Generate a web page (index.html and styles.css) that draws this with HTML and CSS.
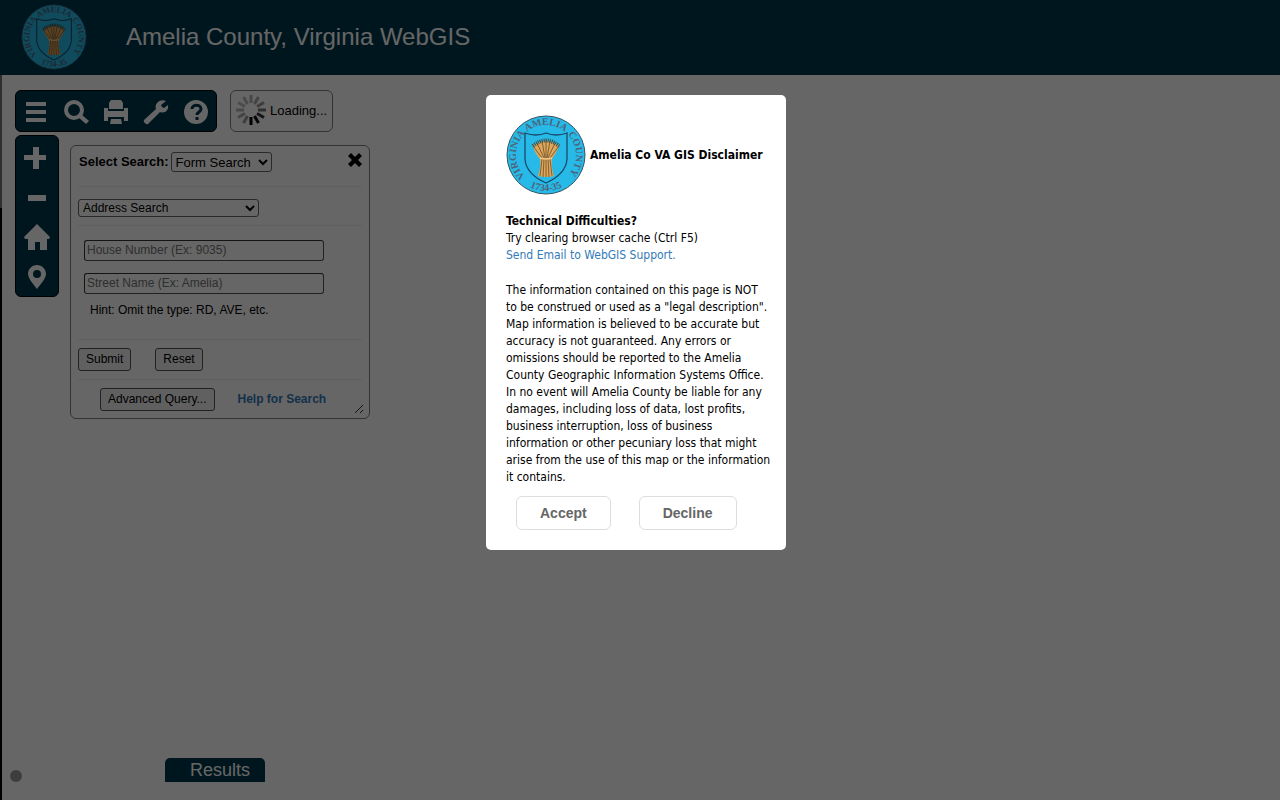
FILE: index.html
```html
<!DOCTYPE html>
<html lang="en">
<head>
  <meta charset="UTF-8">
  <meta name="viewport" content="width=device-width, initial-scale=1.0">
  <title>Amelia County, Virginia WebGIS</title>
  <link rel="stylesheet" href="styles.css">
</head>
<body>
  <!-- county seal, shared by the header and the disclaimer -->
  <svg class="defs" aria-hidden="true">
    <defs>
      <path id="arcTop" d="M10 40 A30 30 0 0 1 70 40"/>
      <path id="arcLower" d="M4 40 A36 36 0 0 0 76 40"/>
      <symbol id="seal" viewBox="0 0 80 80">
        <circle cx="40" cy="40" r="39" fill="#27b9e8" stroke="#31545f" stroke-width="1"/>
        <g class="seal-text">
          <text transform="rotate(-90 40 40)"><textPath href="#arcTop" startOffset="50%">VIRGINIA</textPath></text>
          <text><textPath href="#arcTop" startOffset="50%">AMELIA</textPath></text>
          <text transform="rotate(88 40 40)"><textPath href="#arcTop" startOffset="50%">COUNTY</textPath></text>
          <text><textPath href="#arcLower" startOffset="50%">1734-35</textPath></text>
        </g>
        <path d="M19 18 Q30 22 40 18 Q50 22 61 18 V44 Q60 59 40 68 Q20 59 19 44 Z" fill="none" stroke="#184a68" stroke-width="1.3"/>
        <path d="M27 31 Q40 22 53 31 Q50 39 46 44 Q45 52 48 61 Q40 63 32 61 Q35 52 34 44 Q29 39 27 31 Z" fill="#dda75c"/>
        <path d="M27 31 L36 43 M31 28 L38 43 M36 26 L39 43 M40 25 V62 M44 26 L41 43 M49 28 L42 43 M53 31 L44 43 M36 44 L34 61 M38 44 L37 62 M42 44 L43 62 M44 44 L46 61" fill="none" stroke="#6b4b26" stroke-width="0.8"/>
        <path d="M27 31 Q40 20 53 31" fill="none" stroke="#4b4a35" stroke-width="4" stroke-dasharray="1 1"/>
        <path d="M34 43 Q40 45 46 43" fill="none" stroke="#f0c98a" stroke-width="1.5"/>
      </symbol>
    </defs>
  </svg>

  <header class="header">
    <svg class="header-logo" role="img" aria-label="County seal"><use href="#seal"/></svg>
    <h1 class="header-title">Amelia County, Virginia WebGIS</h1>
  </header>

  <main class="map">
    <div class="top-row">
      <nav class="toolbar">
        <button class="tool" aria-label="Menu"><svg viewBox="0 0 24 24"><path d="M2 2h20v4H2zM2 10h20v4H2zM2 18h20v4H2z"/></svg></button>
        <button class="tool" aria-label="Search"><svg viewBox="0 0 24 24"><circle cx="10" cy="10" r="8" fill="none" stroke="currentColor" stroke-width="4"/><path d="M14 17l3-3 8 7-3 3z"/></svg></button>
        <button class="tool" aria-label="Print"><svg viewBox="0 0 24 24"><path d="M7 0h10l2 3v6H5V3zM0 8h4v3h16V8h4v13h-4v-4H4v4H0zM7 19h10l1 5H6z"/></svg></button>
        <button class="tool" aria-label="Tools"><svg viewBox="0 0 24 24"><path d="M22 1l-5 4 1 2 2 1 4-3c1 5-3 9-8 7L4 24c-2 1-5-2-4-4L12 9C10 4 16-2 22 1z"/></svg></button>
        <button class="tool" aria-label="Help"><svg viewBox="0 0 24 24"><circle cx="12" cy="12" r="12"/><path class="cut" d="M8 9c0-5 9-5 9 0 0 3-4 3-4 6"/><path class="cut" d="M13 17v3"/></svg></button>
      </nav>
      <div class="loading">
        <svg class="spinner" viewBox="0 0 32 32">
          <g fill="none" stroke-width="3">
            <path d="M16 1v8" stroke="#b5b5b5"/>
            <path d="M16 1v8" stroke="#aaa" transform="rotate(30 16 16)"/>
            <path d="M16 1v8" stroke="#999" transform="rotate(60 16 16)"/>
            <path d="M16 1v8" stroke="#777" transform="rotate(90 16 16)"/>
            <path d="M16 1v8" stroke="#333" transform="rotate(120 16 16)"/>
            <path d="M16 1v8" stroke="#111" transform="rotate(150 16 16)"/>
            <path d="M16 1v8" stroke="#000" transform="rotate(180 16 16)"/>
            <path d="M16 1v8" stroke="#999" transform="rotate(210 16 16)"/>
            <path d="M16 1v8" stroke="#aaa" transform="rotate(240 16 16)"/>
            <path d="M16 1v8" stroke="#b5b5b5" transform="rotate(270 16 16)"/>
            <path d="M16 1v8" stroke="#bbb" transform="rotate(300 16 16)"/>
            <path d="M16 1v8" stroke="#bbb" transform="rotate(330 16 16)"/>
          </g>
        </svg>
        <span>Loading...</span>
      </div>
    </div>

    <div class="side-row">
      <nav class="zoombar">
        <button class="tool" aria-label="Zoom in"><svg viewBox="0 0 24 24"><path d="M8 1h6v8h7v5h-7v9H8v-9H-1V9h9z"/></svg></button>
        <button class="tool" aria-label="Zoom out"><svg viewBox="0 0 24 24"><path d="M3 9h18v6H3z"/></svg></button>
        <button class="tool" aria-label="Home"><svg viewBox="0 0 24 24"><path d="M12-2l13 13-1 2h-2v11h-7v-8h-5v8H3V13H0l-1-2z"/></svg></button>
        <button class="tool" aria-label="Locate"><svg viewBox="0 0 24 24"><path fill-rule="evenodd" d="M12-1c5 0 9 4 9 9 0 4-5 10-9 15C8 18 3 12 3 8c0-5 4-9 9-9zm0 5a4 4 0 1 0 0 8 4 4 0 1 0 0-8z"/></svg></button>
      </nav>

      <form class="search-panel">
        <div class="search-head">
          <label class="search-label" for="searchType">Select Search:</label>
          <select class="search-type" id="searchType"><option>Form Search</option></select>
          <button class="close" type="button" aria-label="Close"><svg viewBox="0 0 16 16"><path d="M5 1l4 4 4-4 3 3-4 4 4 4-3 3-4-4-4 4-3-3 4-4-4-4z"/></svg></button>
        </div>
        <div class="search-kind">
          <select class="kind-select" aria-label="Search kind"><option>Address Search</option></select>
        </div>
        <div class="fields">
          <input class="field" type="text" aria-label="House Number" placeholder="House Number (Ex: 9035)">
          <input class="field" type="text" aria-label="Street Name" placeholder="Street Name (Ex: Amelia)">
          <p class="hint">Hint: Omit the type: RD, AVE, etc.</p>
        </div>
        <div class="actions">
          <button class="btn" type="button">Submit</button>
          <button class="btn" type="button">Reset</button>
        </div>
        <div class="more">
          <button class="btn" type="button">Advanced Query...</button>
          <a class="help-link" href="#">Help for Search</a>
        </div>
        <svg class="grip" viewBox="0 0 8 8"><path d="M0 8L8 0M5 8L8 5" stroke="#333" fill="none"/></svg>
      </form>
    </div>

    <footer class="bottom-row">
      <span class="map-dot"></span>
      <button class="results-tab">Results</button>
    </footer>
  </main>

  <div class="overlay">
    <section class="modal" role="dialog" aria-labelledby="modalTitle">
      <div class="modal-head">
        <svg class="modal-logo" role="img" aria-label="County seal"><use href="#seal"/></svg>
        <h2 class="modal-title" id="modalTitle">Amelia Co VA GIS Disclaimer</h2>
      </div>
      <p class="support">
        <b>Technical Difficulties?</b><br>
        Try clearing browser cache (Ctrl F5)<br>
        <a href="#">Send Email to WebGIS Support.</a>
      </p>
      <p class="legal">
        The information contained on this page is NOT<br>
        to be construed or used as a "legal description".<br>
        Map information is believed to be accurate but<br>
        accuracy is not guaranteed. Any errors or<br>
        omissions should be reported to the Amelia<br>
        County Geographic Information Systems Office.<br>
        In no event will Amelia County be liable for any<br>
        damages, including loss of data, lost profits,<br>
        business interruption, loss of business<br>
        information or other pecuniary loss that might<br>
        arise from the use of this map or the information<br>
        it contains.
      </p>
      <div class="modal-buttons">
        <button class="choice">Accept</button>
        <button class="choice">Decline</button>
      </div>
    </section>
  </div>
</body>
</html>
```
FILE: styles.css
```css
* {
  box-sizing: border-box;
}

body {
  margin: 0;
  min-height: 100vh;
  display: flex;
  flex-direction: column;
  background: #fff;
  font-family: Arial, "Liberation Sans", sans-serif;
  font-size: 12px;
  color: #000;
}

button, input, select {
  font-family: inherit;
  font-size: 12px;
  color: inherit;
}

a {
  color: #337ab7;
  text-decoration: none;
}

.defs {
  position: absolute;
  width: 0;
  height: 0;
}

.seal-text {
  font-family: "Liberation Serif", serif;
  font-size: 10px;
  font-weight: bold;
  text-anchor: middle;
  fill: #4d6478;
}

/* header */
.header {
  display: flex;
  align-items: center;
  gap: 39px;
  height: 75px;
  padding: 0 0 1px 21px;
  background: #00394d;
  color: #fff;
}

.header-logo {
  width: 66px;
  height: 66px;
}

.header-title {
  margin: 0;
  font-size: 24px;
  font-weight: normal;
}

/* map area, with the thin strip down its left edge */
.map {
  flex: 1;
  display: flex;
  flex-direction: column;
  padding: 15px 0 0 2px;
  background: linear-gradient(#777 133px, #000 133px) 0 0 / 2px 100% no-repeat;
}

.top-row {
  display: flex;
  gap: 13px;
  margin-bottom: 3px;
  padding: 0 13px;
}

.toolbar, .zoombar {
  display: flex;
  border: 1px solid #000;
  border-radius: 6px;
  background: #00394d;
}

.toolbar {
  height: 42px;
  padding-top: 1px;
}

.zoombar {
  flex-direction: column;
  width: 44px;
  height: 162px;
  padding: 2px 1px 0;
}

.tool {
  display: flex;
  flex-shrink: 0;
  align-items: center;
  justify-content: center;
  width: 40px;
  height: 40px;
  padding: 0;
  border: none;
  background: none;
  color: #fff;
  cursor: pointer;
}

.tool svg {
  width: 24px;
  height: 24px;
  fill: currentColor;
  overflow: visible;
}

.tool .cut {
  fill: none;
  stroke: #00394d;
  stroke-width: 3;
}

.loading {
  display: flex;
  align-items: center;
  gap: 3px;
  height: 42px;
  padding: 0 5px 2px 4px;
  border: 1px solid #808080;
  border-radius: 6px;
  font-size: 13px;
}

.spinner {
  width: 32px;
  height: 32px;
}

.side-row {
  display: flex;
  align-items: flex-start;
  gap: 11px;
  padding: 0 13px;
}

/* search panel */
.search-panel {
  position: relative;
  width: 300px;
  margin-top: 10px;
  padding: 0 7px;
  border: 1px solid #808080;
  border-radius: 6px;
}

.search-head {
  display: flex;
  align-items: flex-start;
  height: 41px;
  padding: 6px 0 0 1px;
  border-bottom: 1px solid #eee;
}

.search-label {
  margin-right: 2px;
  font-size: 13px;
  font-weight: bold;
  line-height: 20px;
}

select {
  border: 1px solid #666;
  border-radius: 3px;
  background: #fff;
}

.search-type {
  width: 101px;
  height: 20px;
  font-size: 13px;
}

.close {
  width: 16px;
  height: 16px;
  margin-left: auto;
  padding: 0;
  border: none;
  background: none;
}

.close svg {
  display: block;
}

.search-kind {
  height: 39px;
  padding-top: 12px;
  border-bottom: 1px solid #eee;
}

.kind-select {
  display: block;
  width: 181px;
  height: 18px;
}

.fields {
  display: flex;
  flex-direction: column;
  gap: 12px;
  height: 114px;
  padding: 14px 6px 0;
  border-bottom: 1px solid #eee;
}

.field {
  width: 240px;
  height: 21px;
  padding: 0 2px 1px;
  border: 1px solid #555;
  border-top-color: #333;
  border-left-color: #333;
  border-radius: 3px;
}

.field::placeholder {
  color: #757575;
}

.hint {
  margin: -4px 6px;
  line-height: 16px;
}

.actions {
  display: flex;
  gap: 24px;
  height: 40px;
  padding-top: 8px;
  border-bottom: 1px solid #eee;
}

.more {
  display: flex;
  gap: 23px;
  height: 38px;
  padding: 8px 0 0 22px;
}

.btn {
  height: 23px;
  padding: 0 7px 2px;
  border: 1px solid #555;
  border-radius: 3px;
  background: #efefef;
}

.help-link {
  font-weight: bold;
  line-height: 22px;
}

.grip {
  position: absolute;
  right: 6px;
  bottom: 5px;
  width: 8px;
  height: 8px;
}

/* bottom of the map */
.bottom-row {
  display: flex;
  align-items: flex-end;
  gap: 143px;
  margin-top: auto;
  padding: 0 0 18px 8px;
}

.map-dot {
  width: 12px;
  height: 12px;
  border-radius: 50%;
  background: #999;
}

.results-tab {
  width: 100px;
  height: 24px;
  padding: 0 0 0 10px;
  border: none;
  border-radius: 5px 5px 0 0;
  background: #00394d;
  color: #fff;
  font-size: 18px;
}

/* disclaimer */
.overlay {
  position: fixed;
  inset: 0;
  display: flex;
  justify-content: center;
  align-items: flex-start;
  padding: 95px 8px 0 0;
  background: rgba(0, 0, 0, 0.6);
}

.modal {
  width: 300px;
  padding: 20px;
  border-radius: 5px;
  background: #fff;
  font-family: "DejaVu Sans Condensed", "DejaVu Sans", sans-serif;
  line-height: 17px;
  white-space: nowrap;
}

.modal-head {
  display: flex;
  align-items: center;
  gap: 4px;
  margin-bottom: 18px;
}

.modal-logo {
  width: 80px;
  height: 80px;
}

.modal-title {
  margin: 0;
  font-size: 12px;
}

.support {
  margin: 0 0 18px;
}

.legal {
  margin: 0 0 10px;
}

.modal-buttons {
  display: flex;
  gap: 28px;
  padding-left: 10px;
}

.choice {
  height: 34px;
  padding: 0 23px;
  border: 1px solid #ddd;
  border-radius: 6px;
  background: #fff;
  color: #666;
  font-family: Arial, "Liberation Sans", sans-serif;
  font-size: 14px;
  font-weight: bold;
}
```
